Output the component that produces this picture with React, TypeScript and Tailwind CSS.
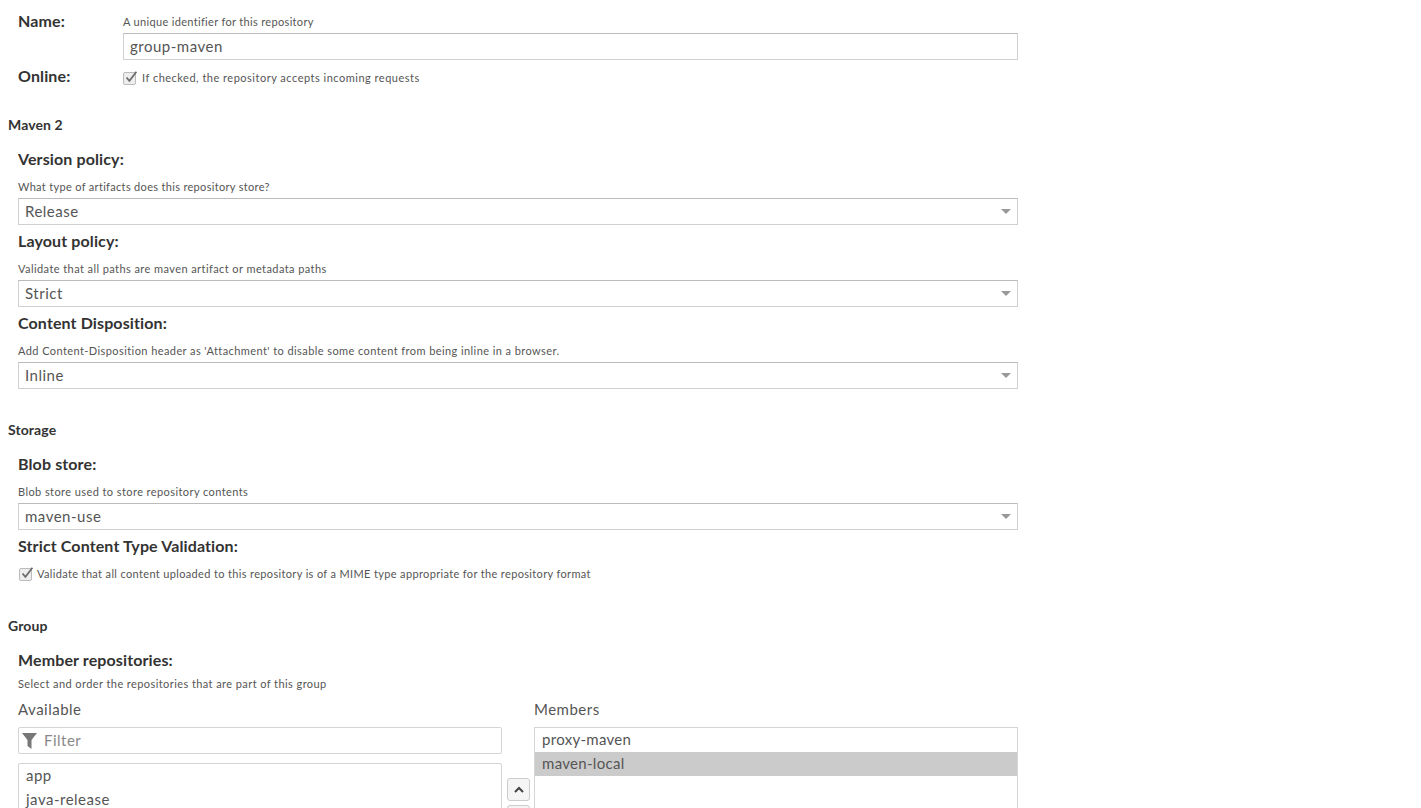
const font = { fontFamily: "Lato, sans-serif" };

const Label = ({ children, className = "" }: { children: string; className?: string }) => (
  <div className={`text-[16px] leading-[20px] font-bold tracking-[0.12px] text-[#333] ${className}`}>{children}</div>
);

const Help = ({ children, className = "" }: { children: string; className?: string }) => (
  <div className={`text-[11px] leading-[14px] tracking-[0.42px] text-[#555] ${className}`}>{children}</div>
);

const Section = ({ children, className = "" }: { children: string; className?: string }) => (
  <div className={`pl-2 text-[14px] leading-[16px] font-bold tracking-[0.1px] text-[#333] ${className}`}>{children}</div>
);

const Check = () => (
  <span className="relative inline-block w-[13px] h-[13px] shrink-0 rounded-[2px] border border-[#bbb] bg-[#eee]">
    <svg className="absolute left-[0px] top-[-3px]" width="14" height="14" viewBox="0 0 14 14">
      <path d="M2.5 7.5 L5.4 10.8 L12.4 1.8" fill="none" stroke="#6a6a6a" strokeWidth="1.7" />
    </svg>
  </span>
);

const Select = ({ value, className = "" }: { value: string; className?: string }) => (
  <div className={`flex items-center justify-between h-[27px] w-[1000px] border border-[#d0d0d0] border-t-[#bbb] pl-[6px] pr-[6px] ${className}`}>
    <span className="text-[15px] tracking-[0.5px] text-[#555]">{value}</span>
    <svg width="10" height="5" viewBox="0 0 10 5"><path d="M0 0 H10 L5 5 Z" fill="#999" /></svg>
  </div>
);

export default function App() {
  return (
    <div style={font} className="h-[808px] w-[1421px] overflow-hidden bg-white">
      <div className="flex pl-[18px] pt-[11px]">
        <Label className="w-[105px]">Name:</Label>
        <div>
          <Help className="mt-[4px] tracking-[0.33px]!">A unique identifier for this repository</Help>
          <div className="mt-[4px] flex items-center h-[27px] w-[895px] border border-[#d0d0d0] border-t-[#bbb] pl-[6px] text-[15px] tracking-[0.5px] text-[#555]">group-maven</div>
        </div>
      </div>
      <div className="flex pl-[18px] mt-[7px] h-[20px]">
        <Label className="w-[105px] -mt-[1px]">Online:</Label>
        <div className="flex items-center gap-[6px] h-[20px] mt-[1px]">
          <Check />
          <Help className="tracking-[0.5px]!">If checked, the repository accepts incoming requests</Help>
        </div>
      </div>

      <Section className="mt-[30px]">Maven 2</Section>

      <div className="pl-[18px] mt-[16px]">
        <Label>Version policy:</Label>
        <Help className="mt-[11px] tracking-[0.32px]!">What type of artifacts does this repository store?</Help>
        <Select value="Release" className="mt-[4px]" />
        <Label className="mt-[6px]">Layout policy:</Label>
        <Help className="mt-[11px]">Validate that all paths are maven artifact or metadata paths</Help>
        <Select value="Strict" className="mt-[4px]" />
        <Label className="mt-[6px]">Content Disposition:</Label>
        <Help className="mt-[11px]">Add Content-Disposition header as 'Attachment' to disable some content from being inline in a browser.</Help>
        <Select value="Inline" className="mt-[4px]" />
      </div>

      <Section className="mt-[33px]">Storage</Section>

      <div className="pl-[18px] mt-[16px]">
        <Label>Blob store:</Label>
        <Help className="mt-[11px]">Blob store used to store repository contents</Help>
        <Select value="maven-use" className="mt-[4px]" />
        <Label className="mt-[6px]">Strict Content Type Validation:</Label>
        <div className="flex items-center gap-[5px] mt-[8px] ml-[1px] h-[20px]">
          <Check />
          <Help className="tracking-[0.35px]!">Validate that all content uploaded to this repository is of a MIME type appropriate for the repository format</Help>
        </div>
      </div>

      <Section className="mt-[34px]">Group</Section>

      <div className="pl-[18px] mt-[16px]">
        <Label>Member repositories:</Label>
        <Help className="mt-[7px]">Select and order the repositories that are part of this group</Help>
        <div className="flex mt-[8px]">
          <div className="w-[484px]">
            <div className="text-[15px] leading-[20px] tracking-[0.5px] text-[#555]">Available</div>
            <div className="mt-[8px] flex items-center h-[27px] border border-[#d5d5d5] rounded-[2px] pl-[3px] gap-[7px]">
              <svg width="15" height="16" viewBox="0 0 15 16"><path d="M0 0 H15 L9.5 7 V16 L5.5 13 V7 Z" fill="#777" /></svg>
              <span className="text-[15px] tracking-[0.5px] text-[#888]">Filter</span>
            </div>
            <div className="mt-[9px] h-[80px] border border-[#d5d5d5] rounded-[2px] pl-[7px] text-[15px] leading-[24px] tracking-[0.5px] text-[#555]">
              <div className="-mt-[1px]">app</div>
              <div>java-release</div>
            </div>
          </div>
          <div className="w-[32px] pl-[5px] pt-[79px] flex flex-col gap-[4px]">
            <div className="flex items-center justify-center w-[23px] h-[23px] border border-[#ccc] rounded-[3px] bg-[#f5f5f5]">
              <svg width="10" height="7" viewBox="0 0 10 7"><path d="M1 6 L5 2 L9 6" fill="none" stroke="#444" strokeWidth="2" /></svg>
            </div>
            <div className="w-[23px] h-[23px] border border-[#ccc] rounded-[3px] bg-[#f5f5f5]" />
          </div>
          <div className="w-[484px]">
            <div className="text-[15px] leading-[20px] tracking-[0.5px] text-[#555]">Members</div>
            <div className="mt-[8px] h-[100px] border border-[#d5d5d5] text-[15px] leading-[22px] tracking-[0.3px] text-[#555]">
              <div className="pl-[7px] pb-[2px]">proxy-maven</div>
              <div className="pl-[7px] pb-[2px] bg-[#cbcbcb]">maven-local</div>
            </div>
          </div>
        </div>
      </div>
    </div>
  );
}
